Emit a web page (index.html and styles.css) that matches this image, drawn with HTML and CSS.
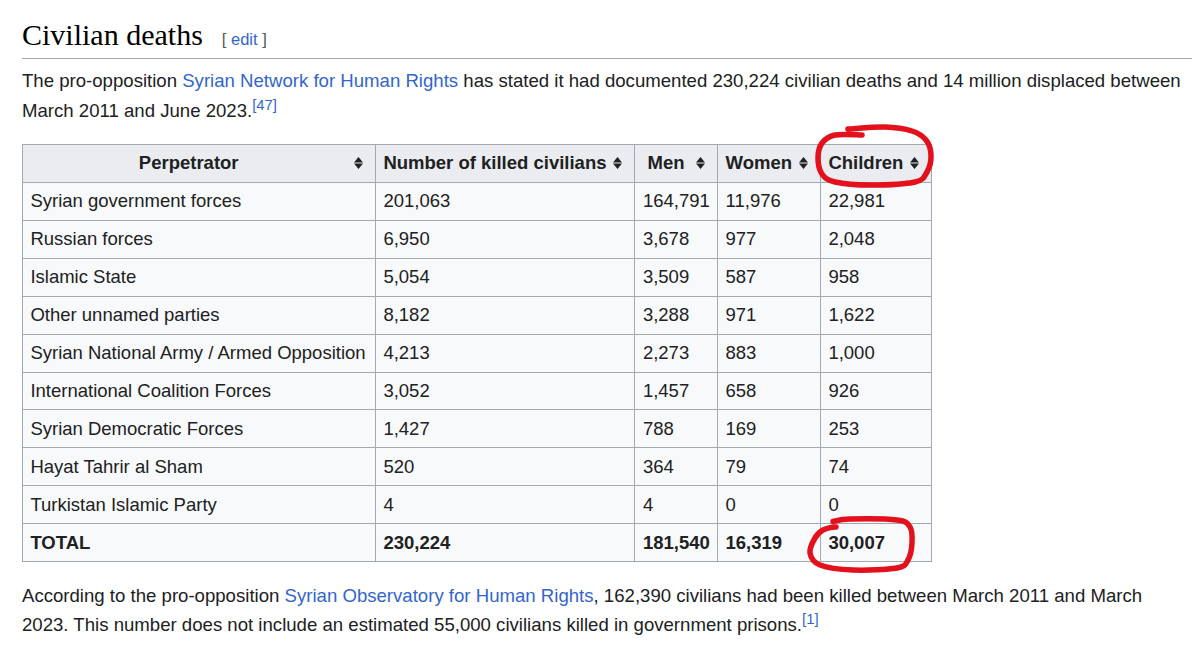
FILE: index.html
```html
<!DOCTYPE html>
<html lang="en">
<head>
<meta charset="utf-8">
<title>Civilian deaths</title>
<link rel="stylesheet" href="styles.css">
</head>
<body>
<div class="content">
  <h2 class="section-title"><span class="headline">Civilian deaths</span><span class="editsection"><span class="bracket">[</span> <a class="link" href="#">edit</a> <span class="bracket">]</span></span></h2>
  <p class="para">The pro-opposition <a class="link" href="#">Syrian Network for Human Rights</a> has stated it had documented 230,224 civilian deaths and 14 million displaced between March 2011 and June 2023.<sup class="ref"><a class="link" href="#">[47]</a></sup></p>

  <table class="wikitable">
    <thead>
      <tr>
        <th class="sortable"><div class="th-inner"><span class="th-label">Perpetrator</span><svg class="sort-icon" width="9" height="12" viewBox="0 0 9 12"><path d="M4.5 0 L9 5.4 H0 Z M0 6.6 H9 L4.5 12 Z"/></svg></div></th>
        <th class="sortable"><div class="th-inner"><span class="th-label">Number of killed civilians</span><svg class="sort-icon" width="9" height="12" viewBox="0 0 9 12"><path d="M4.5 0 L9 5.4 H0 Z M0 6.6 H9 L4.5 12 Z"/></svg></div></th>
        <th class="sortable"><div class="th-inner"><span class="th-label">Men</span><svg class="sort-icon" width="9" height="12" viewBox="0 0 9 12"><path d="M4.5 0 L9 5.4 H0 Z M0 6.6 H9 L4.5 12 Z"/></svg></div></th>
        <th class="sortable"><div class="th-inner"><span class="th-label">Women</span><svg class="sort-icon" width="9" height="12" viewBox="0 0 9 12"><path d="M4.5 0 L9 5.4 H0 Z M0 6.6 H9 L4.5 12 Z"/></svg></div></th>
        <th class="sortable"><div class="th-inner"><span class="th-label">Children</span><svg class="sort-icon" width="9" height="12" viewBox="0 0 9 12"><path d="M4.5 0 L9 5.4 H0 Z M0 6.6 H9 L4.5 12 Z"/></svg></div></th>
      </tr>
    </thead>
    <tbody>
      <tr><td class="name">Syrian government forces</td><td>201,063</td><td>164,791</td><td>11,976</td><td>22,981</td></tr>
      <tr><td class="name">Russian forces</td><td>6,950</td><td>3,678</td><td>977</td><td>2,048</td></tr>
      <tr><td class="name">Islamic State</td><td>5,054</td><td>3,509</td><td>587</td><td>958</td></tr>
      <tr><td class="name">Other unnamed parties</td><td>8,182</td><td>3,288</td><td>971</td><td>1,622</td></tr>
      <tr><td class="name">Syrian National Army / Armed Opposition</td><td>4,213</td><td>2,273</td><td>883</td><td>1,000</td></tr>
      <tr><td class="name">International Coalition Forces</td><td>3,052</td><td>1,457</td><td>658</td><td>926</td></tr>
      <tr><td class="name">Syrian Democratic Forces</td><td>1,427</td><td>788</td><td>169</td><td>253</td></tr>
      <tr><td class="name">Hayat Tahrir al Sham</td><td>520</td><td>364</td><td>79</td><td>74</td></tr>
      <tr><td class="name">Turkistan Islamic Party</td><td>4</td><td>4</td><td>0</td><td>0</td></tr>
      <tr class="total"><td class="name">TOTAL</td><td>230,224</td><td>181,540</td><td>16,319</td><td>30,007</td></tr>
    </tbody>
  </table>

  <p class="para">According to the pro-opposition <a class="link" href="#">Syrian Observatory for Human Rights</a>, 162,390 civilians had been killed between March 2011 and March 2023. This number does not include an estimated 55,000 civilians killed in government prisons.<sup class="ref"><a class="link" href="#">[1]</a></sup></p>
</div>

<svg class="annotations" width="1200" height="654" viewBox="0 0 1200 654">
  <path d="M848 129 C854.2 128.7 874.3 126.7 885 127 S905.2 128.8 912 131 S922.8 136 926 140 S930.8 149.7 931 155 S929.7 167.5 927 172 S924.5 179.8 915 182 S883.3 185 870 185 S843 183.8 835 182 S824.8 178 822 174 S818 163.2 818 158 S819.2 146.8 822 143 S828.3 136.3 835 135 S857.5 135 862 135"/>
  <path d="M833 521.5 C835.8 521.1 839.3 519.25 850 519 S887 518.7 897 520 S907.5 523.2 910 527 S912.3 537.5 912 543 S910.5 555.8 908 560 S906.2 566.3 897 568 S865.8 570.5 853 570 S827.2 567.8 820 565 S810.8 557.5 810 553 S812.8 541.8 815 538 S819.5 531.8 823 530 S833.8 526.5 836 527"/>
</svg>
</body>
</html>
```

FILE: styles.css
```css
html, body {
  margin: 0;
  padding: 0;
  background: #ffffff;
}

body {
  font-family: "Liberation Sans", Arial, sans-serif;
  font-size: 18.6px;
  color: #202122;
  position: relative;
}

.content {
  padding: 16px 8px 0 22px;
}

.section-title {
  margin: 0;
  padding: 0;
  font-family: "Liberation Serif", "Times New Roman", serif;
  font-weight: normal;
  font-size: 30px;
  line-height: 38px;
  color: #000000;
  border-bottom: 1px solid #a2a9b1;
  display: flex;
  align-items: baseline;
}

.editsection {
  font-family: "Liberation Sans", Arial, sans-serif;
  font-size: 16.5px;
  margin-left: 19px;
  color: #54595d;
}

.bracket {
  color: #54595d;
}

.link {
  color: #3366cc;
  text-decoration: none;
}

.para {
  margin: 7px 0 0 0;
  line-height: 29.6px;
}

.ref {
  font-size: 80%;
  line-height: 1;
  vertical-align: super;
}

.wikitable {
  margin: 18.5px 0;
  border-collapse: collapse;
  background: #f8f9fa;
  border: 1px solid #a2a9b1;
  color: #202122;
  font-size: 18.5px;
}

.wikitable th,
.wikitable td {
  border: 1px solid #a2a9b1;
  padding: 3.7px 7.4px;
  line-height: 29.6px;
  text-align: left;
  white-space: nowrap;
}

.wikitable td.name {
  padding-right: 9.4px;
}

.wikitable th {
  background: #eaecf0;
  font-weight: bold;
}

.wikitable th.sortable {
  padding-right: 12px;
}

.th-inner {
  display: flex;
  align-items: center;
}

.th-label {
  flex: 1;
  text-align: center;
}

.sort-icon {
  margin-left: 7px;
  fill: #202122;
  flex: none;
}

.total td {
  font-weight: bold;
}

.annotations {
  position: absolute;
  left: 0;
  top: 0;
  pointer-events: none;
  fill: none;
  stroke: #e3111b;
  stroke-width: 5.5;
  stroke-linecap: round;
  stroke-linejoin: round;
}
```
